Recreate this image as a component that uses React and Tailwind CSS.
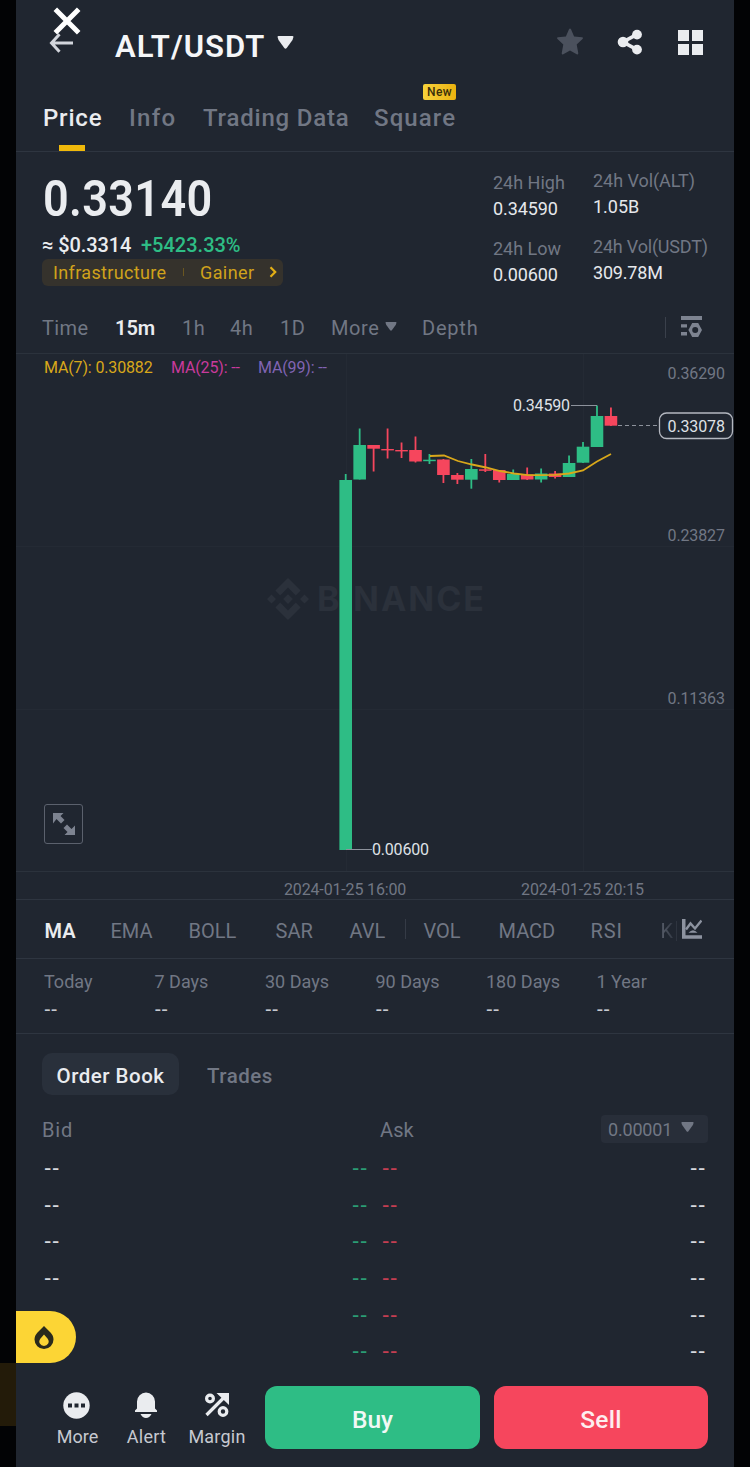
import { clsx } from "clsx";

const tabs = [
  { label: "Price", width: "w-[86px]", active: true },
  { label: "Info", width: "w-[74px] tracking-[1.3px]" },
  { label: "Trading Data", width: "w-[171px]" },
  { label: "Square", width: "w-[84px] tracking-[1.1px]", isNew: true },
];

const intervals = [
  { label: "Time", width: "w-[73px]" },
  { label: "15m", width: "w-[67px]", active: true },
  { label: "1h", width: "w-[48px]" },
  { label: "4h", width: "w-[50px]" },
  { label: "1D", width: "w-[51px]" },
];

const indicators = [
  { label: "MA", width: "w-[66px]", active: true },
  { label: "EMA", width: "w-[78px]" },
  { label: "BOLL", width: "w-[87px]" },
  { label: "SAR", width: "w-[74px]" },
  { label: "AVL", width: "w-[55px]" },
];

const subIndicators = [
  { label: "VOL", width: "w-[75px]" },
  { label: "MACD", width: "w-[92px]" },
  { label: "RSI", width: "w-[70px] tracking-[0.9px]" },
];

const periods = ["Today", "7 Days", "30 Days", "90 Days", "180 Days", "1 Year"];

// [body top, body bottom, wick top, wick bottom, up?]
const candles = [
  [480, 850, 474, 850, true],
  [445, 479.5, 428.5, 479.5, true],
  [445, 448.7, 445, 471.5, false],
  [449, 450.4, 428.5, 458.5, false],
  [450, 451.4, 442.5, 458, false],
  [450, 461.5, 436.5, 462.5, false],
  [459.7, 461.2, 454, 464, true],
  [459.5, 475, 459, 483, false],
  [475, 479.7, 473, 484, false],
  [469, 479.7, 459, 488.7, true],
  [469.3, 470.8, 454, 472, false],
  [470, 480, 470, 482.5, false],
  [474, 480, 469.5, 480, true],
  [474.5, 479.5, 467.5, 480, false],
  [473.5, 479.5, 468.5, 482.5, true],
  [473.5, 477, 471, 478.5, false],
  [463, 477, 455.5, 477, true],
  [446.7, 462.7, 442, 463, true],
  [416, 447, 405.5, 447, true],
  [416, 425.7, 407.5, 426, false],
];

const ma7 =
  "430,456 444,455.5 458,461 472,464.5 486,467.5 500,471 514,473.5 528,475.2 541,475.2 555,474.8 569,473.5 583,470.5 597,461.5 611,454";

function Caret({ className }) {
  return (
    <svg viewBox="0 0 16 13" className={className} fill="currentColor">
      <path d="M1 0h14q1.3 0 .8 1.6L15 4 9.2 12q-1.2 1.4-2.4 0L1 4 .2 1.6Q-.3 0 1 0z" />
    </svg>
  );
}

function Stat({ label, value, labelClass, valueClass }) {
  return (
    <div className="h-[66px] text-[18px] whitespace-nowrap">
      <div className={clsx("h-[26px] leading-[26px] text-[#717784]", labelClass)}>{label}</div>
      <div className={clsx("h-[26px] leading-[26px] text-[#e6e8ec]", valueClass)}>{value}</div>
    </div>
  );
}

function Header() {
  return (
    <header className="relative h-[84px] flex items-start text-[#eaecef]">
      <svg className="w-[24px] h-[20px] ml-[33px] mt-[33px]" viewBox="0 0 24 20" fill="none" stroke="#d2d5dc" strokeWidth="3">
        <path d="M24 10H2.500M10.500 1.200L2.500 10l8 8.800" />
      </svg>
      {/* Close button of the image viewer */}
      <svg className="absolute left-[37px] top-[7px] w-[28px] h-[28px]" viewBox="0 0 28 28" stroke="#fff" strokeWidth="5">
        <path d="M2.300 2.300l23.400 23.400M25.700 2.300L2.300 25.700" />
      </svg>
      <h1 className="ml-[42px] mt-[27px] w-[162px] h-[40px] leading-[40px] text-[31px] font-semibold tracking-[1px] whitespace-nowrap text-[#f5f6f8]">
        ALT/USDT
      </h1>
      <Caret className="mt-[36px] w-[17px] h-[13px]" />
      <div className="ml-auto mr-[31px] mt-[28px] flex items-center">
        <svg className="w-[28px] h-[28px] mr-[33px]" viewBox="0 0 28 28" fill="#4b515d">
          <path d="M13 1.200q1-1.600 2 0l3.100 7.300 7.900.8q1.600.4.5 1.700l-5.800 5.400 1.600 8.900q0 1.600-1.600.9L14 22.400l-6.700 3.800q-1.600.7-1.600-.9l1.600-8.900L1.500 11Q.4 9.700 2 9.300l7.900-.8z" />
        </svg>
        <svg className="w-[26px] h-[26px] mr-[35px]" viewBox="0 0 26 26" fill="#eaecef">
          <path d="M20 5.400L6 13l14 7.600" fill="none" stroke="#eaecef" strokeWidth="3.600" />
          <circle cx="6" cy="13" r="5.300" />
          <circle cx="20" cy="5.600" r="4.900" />
          <circle cx="20" cy="20.600" r="4.900" />
        </svg>
        <div className="grid grid-cols-2 gap-[3px] w-[25px] h-[25px]">
          <i className="bg-[#eaecef]" />
          <i className="bg-[#eaecef]" />
          <i className="bg-[#eaecef]" />
          <i className="bg-[#eaecef]" />
        </div>
      </div>
    </header>
  );
}

function Tabs() {
  return (
    <nav className="h-[68px] flex pl-[27px] border-b border-[#2e3540] text-[24px] font-medium text-[#717784]">
      {tabs.map((t) => (
        <div key={t.label} className={clsx("relative h-full whitespace-nowrap leading-[69px]", t.width, t.active && "text-[#eaecef]", !t.width.includes("tracking") && "tracking-[0.8px]")}>
          {t.label}
          {t.active && <span className="absolute left-[16px] bottom-0 w-[26px] h-[6px] bg-[#f0b90b]" />}
          {t.isNew && (
            <span className="absolute right-[2px] top-0 w-[33px] h-[16px] rounded-[2px] bg-linear-to-r from-[#f8d33a] to-[#eab20c] text-center text-[12px] leading-[17px] tracking-[0.4px] text-[#3b300b]">
              New
            </span>
          )}
        </div>
      ))}
    </nav>
  );
}

function Summary() {
  return (
    <section className="h-[149px] flex pl-[26px]">
      <div className="w-[451px] pt-[19px]">
        <div className="h-[56px] leading-[57px] text-[49.5px] font-semibold text-[#eaecef] origin-left scale-x-[0.91] tracking-[0.4px] pl-[1px]">0.33140</div>
        <div className="mt-[5px] h-[27px] leading-[26px] flex text-[20px] whitespace-nowrap">
          <span className="w-[99px] font-medium text-[#eaecef] tracking-[-0.1px]">≈ $0.3314</span>
          <span className="text-[#2ebd85] font-medium">+5423.33%</span>
        </div>
        <div className="w-[241px] h-[27px] rounded-[6px] bg-[#35322c] flex items-center pl-[11px] pb-[1px] text-[18px] text-[#d0a21b]">
          <span className="w-[130px] tracking-[0.35px]">Infrastructure</span>
          <span className="w-px h-[8px] bg-[#6a5620] mr-[16px]" />
          <span className="w-[69px] tracking-[0.4px]">Gainer</span>
          <svg className="w-[8px] h-[12px]" viewBox="0 0 8 12" fill="none" stroke="#e3af15" strokeWidth="2.200">
            <path d="M1.500 1.300L6.200 6l-4.700 4.700" />
          </svg>
        </div>
      </div>
      <div className="w-[100px] pt-[18px]">
        <Stat label="24h High" value="0.34590" valueClass="tracking-[-0.1px]" />
        <Stat label="24h Low" value="0.00600" valueClass="tracking-[-0.1px]" />
      </div>
      <div className="pt-[16px]">
        <Stat label="24h Vol(ALT)" value="1.05B" labelClass="tracking-[-0.05px]" />
        <Stat label="24h Vol(USDT)" value="309.78M" labelClass="tracking-[-0.2px]" valueClass="tracking-[-0.2px]" />
      </div>
    </section>
  );
}

function Intervals() {
  return (
    <div className="h-[53px] flex items-center pl-[26px] pt-[2px] border-b border-[#2b323c] text-[20px] text-[#717784] whitespace-nowrap tracking-[0.4px]">
      {intervals.map((i) => (
        <span key={i.label} className={clsx(i.width, i.active && "font-semibold text-[#eaecef] tracking-normal")}>
          {i.label}
        </span>
      ))}
      <span className="w-[54px] tracking-[0.6px]">More</span>
      <Caret className="w-[12px] h-[9px] mr-[25px] mb-[4px]" />
      <span className="tracking-[0.8px]">Depth</span>
      <span className="ml-auto w-px h-[21px] mb-[2px] bg-[#3a404b]" />
      <svg className="ml-[15px] mr-[32px] mb-[3px] w-[21px] h-[21px]" viewBox="0 0 21 21" fill="#7d8390">
        <path d="M0 0h21v4H0zM0 8.200h6v3.400H0zM0 16h6v3.600H0z" />
        <path fillRule="evenodd" d="M11.200 7h6l3.800 7-3.800 7h-6l-3.800-7zM14.200 11a3 3 0 100 6 3 3 0 000-6z" />
      </svg>
    </div>
  );
}

function Chart() {
  return (
    <div className="relative h-[518px] border-b border-[#2b323c]">
      <svg className="block w-[718px] h-[517px] font-[Roboto,sans-serif]" viewBox="16 354 718 517" fontSize="16">
        <path d="M16 546.500H734M16 709.500H734M346.500 354V871M583.500 354V871" stroke="#242a34" />

        {/* Watermark */}
        <g fill="#2b313b">
          <path d="M288 578l12.600 12.600-4.800 4.800-7.800-7.800-7.800 7.800-4.800-4.800zM288 620l12.600-12.600-4.800-4.800-7.800 7.800-7.800-7.800-4.800 4.800zM271.500 594.600l4.500 4.500-4.500 4.500-4.500-4.500zM304.500 594.600l4.500 4.500-4.500 4.500-4.500-4.500zM288 594.300l4.800 4.800-4.800 4.800-4.800-4.800z" />
          <text x="317" y="611" fontSize="34" fontWeight="700" textLength="167" fontFamily="Inter, sans-serif">
            BINANCE
          </text>
        </g>

        {candles.map(([top, bottom, high, low, up], i) => {
          const x = 345.7 + i * 13.96;
          return (
            <g key={i} fill={up ? "#2ebd85" : "#f6465d"}>
              <rect x={x - 0.9} y={high} width="1.8" height={low - high} />
              <rect x={x - 6.3} y={top} width="12.6" height={bottom - top} />
            </g>
          );
        })}
        <polyline points={ma7} fill="none" stroke="#d9a81a" strokeWidth="1.800" />

        <g stroke="#8d929c">
          <path d="M571 405.500h26M346 849.500h26" />
          <path d="M618 425.500h39" strokeDasharray="4 3" />
        </g>
        <g fill="#dfe1e6">
          <text x="513" y="410.500" textLength="57">0.34590</text>
          <text x="372" y="854.500" textLength="57">0.00600</text>
        </g>
        <rect x="659.500" y="413" width="73" height="25.500" rx="7" fill="#202630" stroke="#b4b8c0" strokeWidth="1.300" />
        <text x="667.500" y="431.500" fill="#dfe1e6" textLength="57.500">0.33078</text>
        <g fill="#717784">
          <text x="667.500" y="379" textLength="57.500">0.36290</text>
          <text x="667.500" y="541" textLength="57.500">0.23827</text>
          <text x="667.500" y="704" textLength="57.500">0.11363</text>
        </g>
      </svg>

      <div className="absolute left-[28px] top-[4px] h-[20px] leading-[20px] flex text-[16px] whitespace-nowrap tracking-[-0.15px]">
        <span className="w-[127px] text-[#d9a81a]">MA(7): 0.30882</span>
        <span className="w-[87px] text-[#c93a9c]">MA(25): --</span>
        <span className="text-[#8064b4]">MA(99): --</span>
      </div>
      <button className="absolute left-[28px] top-[450px] w-[39px] h-[40px] rounded-[3px] border border-[#5b616d] flex items-center justify-center">
        <svg className="w-[22px] h-[22px]" viewBox="0 0 22 22" fill="#7d8390">
          <path d="M0 0h10.500L7.500 3l4 4L8 10.500l-4.500-4.500L0 10.500zM22 22H11.500l3-3-4-4 3.500-3.500 4.500 4.500 3.500-3.500z" />
        </svg>
      </button>
    </div>
  );
}

function Indicators() {
  return (
    <div className="h-[59px] flex items-center pl-[28.500px] pt-[3px] border-b border-[#2e3540] text-[20px] text-[#717784] whitespace-nowrap">
      {indicators.map((i) => (
        <span key={i.label} className={clsx(i.width, i.active && "font-semibold text-[#eaecef]")}>
          {i.label}
        </span>
      ))}
      <span className="w-px h-[20px] bg-[#353b46] mr-[18px] -mt-[4px]" />
      {subIndicators.map((i) => (
        <span key={i.label} className={i.width}>
          {i.label}
        </span>
      ))}
      <span className="w-[15px] overflow-hidden bg-linear-to-r from-[#595f6b] to-[#2a303b] bg-clip-text text-transparent">K</span>
      <span className="w-px h-[20px] bg-[#2e343f] mr-[5px]" />
      <svg className="w-[20px] h-[20px] -mt-[4px]" viewBox="0 0 20 20" fill="none" stroke="#8d93a0">
        <path d="M1.700 0v18H20" strokeWidth="3.600" />
        <path d="M4 10.500l4.500-6 4.500 5 6.500-8" strokeWidth="2.400" />
        <path d="M6.500 13.800q4.500-5 9 0z" fill="#8d93a0" stroke="none" />
      </svg>
    </div>
  );
}

function Dashes({ className }) {
  return <span className={clsx("font-['Liberation_Sans',sans-serif]", className)}>--</span>;
}

function OrderBook() {
  return (
    <section className="relative h-[338px]">
      <div className="pt-[19px] pl-[26px] flex text-[20.500px] font-medium">
        <div className="w-[137px] h-[42px] rounded-[10px] bg-[#29303b] text-[#eaecef] flex items-center justify-center pt-[4px] tracking-[0.500px]">Order Book</div>
        <div className="ml-[28px] h-[42px] flex items-center pt-[4px] text-[#717784] tracking-[0.500px]">Trades</div>
      </div>
      <div className="mt-[19px] h-[29px] flex items-center pl-[26px] pr-[26px] text-[20px] text-[#717784]">
        <span className="w-[338px] pt-[2px] tracking-[0.800px]">Bid</span>
        <span className="pt-[2px] tracking-[0.100px]">Ask</span>
        <div className="ml-auto w-[107px] h-[28px] rounded-[4px] bg-[#282e39] flex items-center pl-[7px] pt-[1px] text-[18px]">
          <span className="w-[73px] tracking-[-0.200px]">0.00001</span>
          <Caret className="w-[13px] h-[10px] -mt-[4px]" />
        </div>
      </div>
      <div className="pt-[8px]">
        {[0, 1, 2, 3, 4, 5].map((row) => (
          <div key={row} className="h-[36.650px] flex items-start leading-[34px] pl-[28px] pr-[28px] text-[22px] tracking-[0.700px] text-[#d5d8de]">
            <Dashes className="w-[308px]" />
            <Dashes className="w-[30px] text-[#2a9d74]" />
            <Dashes className="text-[#c43e52]" />
            <Dashes className="ml-auto" />
          </div>
        ))}
      </div>
      <button className="absolute left-0 top-[277px] w-[60px] h-[52px] rounded-r-full bg-[#fcd535] flex items-center pl-[18px]">
        <svg className="w-[20px] h-[23px]" viewBox="0 0 20 23" fillRule="evenodd" fill="#2a2a1c">
          <path d="M10 0l6.500 6.500C18.500 8.600 19.500 11 19.500 13.500a9.500 9.500 0 01-19 0C.5 11 1.500 8.600 3.500 6.500zM10 8.500L6.500 12.500C5 14.500 5 16 5.800 17.500a4.800 4.800 0 008.400 0c.8-1.500.8-3-.7-5z" />
        </svg>
      </button>
    </section>
  );
}

function BottomBar() {
  return (
    <footer className="h-[96px] pt-[14px] pl-[37px] pr-[26px] flex text-[#eaecef]">
      <div className="w-[49px] flex flex-col items-center">
        <svg className="w-[27px] h-[27px] mt-[6px] mr-[2px]" viewBox="0 0 27 27" fill="#eaecef">
          <circle cx="13.500" cy="13.500" r="13.200" />
          <path d="M5 11.600h4v4H5zM11.500 11.600h4v4h-4zM18 11.600h4v4h-4z" fill="#202630" />
        </svg>
        <span className="mt-[5px] leading-[26px] text-[18px] text-[#c6c9d0]">More</span>
      </div>
      <div className="ml-[20px] w-[49px] flex flex-col items-center">
        <svg className="w-[22px] h-[27px] mt-[6px] mr-[1px]" viewBox="0 0 22 27" fill="#eaecef">
          <path d="M2 16.500V9.500a9 9 0 0118 0v7l2 2V20H0v-1.500zM5.500 22h11q-2 4-5.500 4t-5.500-4z" />
        </svg>
        <span className="mt-[5px] leading-[26px] text-[18px] tracking-[0.300px] text-[#c6c9d0]">Alert</span>
      </div>
      <div className="ml-[16px] w-[60px] flex flex-col items-center">
        <svg className="w-[24px] h-[24px] mt-[7px] mr-[1px]" viewBox="0 0 24 24" fill="none" stroke="#eaecef" strokeWidth="3.200">
          <circle cx="5" cy="5.500" r="3.400" />
          <circle cx="18" cy="18.500" r="3.800" />
          <path d="M1.500 22L19 4.500" />
          <path d="M11.500 0H24v12z" fill="#eaecef" stroke="none" />
        </svg>
        <span className="mt-[7px] leading-[26px] text-[18px] tracking-[0.200px] text-[#c6c9d0]">Margin</span>
      </div>
      <button className="ml-[18px] w-[215px] h-[63px] rounded-[12px] bg-[#2ebd85] pt-[5px] text-[24.500px] font-medium text-[#f1f8f5]">Buy</button>
      <button className="ml-[14px] w-[214px] h-[63px] rounded-[12px] bg-[#f6465d] pt-[5px] text-[24.500px] font-medium tracking-[0.300px] text-[#fdeef0]">Sell</button>
    </footer>
  );
}

export default function App() {
  return (
    <div className="w-[750px] h-[1467px] overflow-hidden bg-[#020305] flex font-[Roboto,sans-serif]">
      <aside className="w-[16px] pt-[1363px]">
        <div className="h-[63px] bg-[#231b09]" />
      </aside>
      <main className="w-[718px] h-full bg-[#202630]">
        <Header />
        <Tabs />
        <Summary />
        <Intervals />
        <Chart />
        <div className="relative h-[28px] flex pl-[268px] border-b border-[#2e3540] text-[16px] leading-[35px] whitespace-nowrap text-[#717784]">
          <span className="w-[237px] tracking-[-0.150px]">2024-01-25 16:00</span>
          <span className="tracking-[-0.100px]">2024-01-25 20:15</span>
        </div>
        <Indicators />
        <div className="h-[75px] grid grid-cols-[repeat(6,110.5px)] pl-[28px] pt-[10px] border-b border-[#2e3540]">
          {periods.map((p) => (
            <div key={p} className="flex flex-col whitespace-nowrap">
              <span className="h-[26px] leading-[26px] text-[18px] text-[#717784]">{p}</span>
              <Dashes className="h-[26px] leading-[29px] text-[20px] text-[#c6c9d0]" />
            </div>
          ))}
        </div>
        <OrderBook />
        <BottomBar />
      </main>
    </div>
  );
}
